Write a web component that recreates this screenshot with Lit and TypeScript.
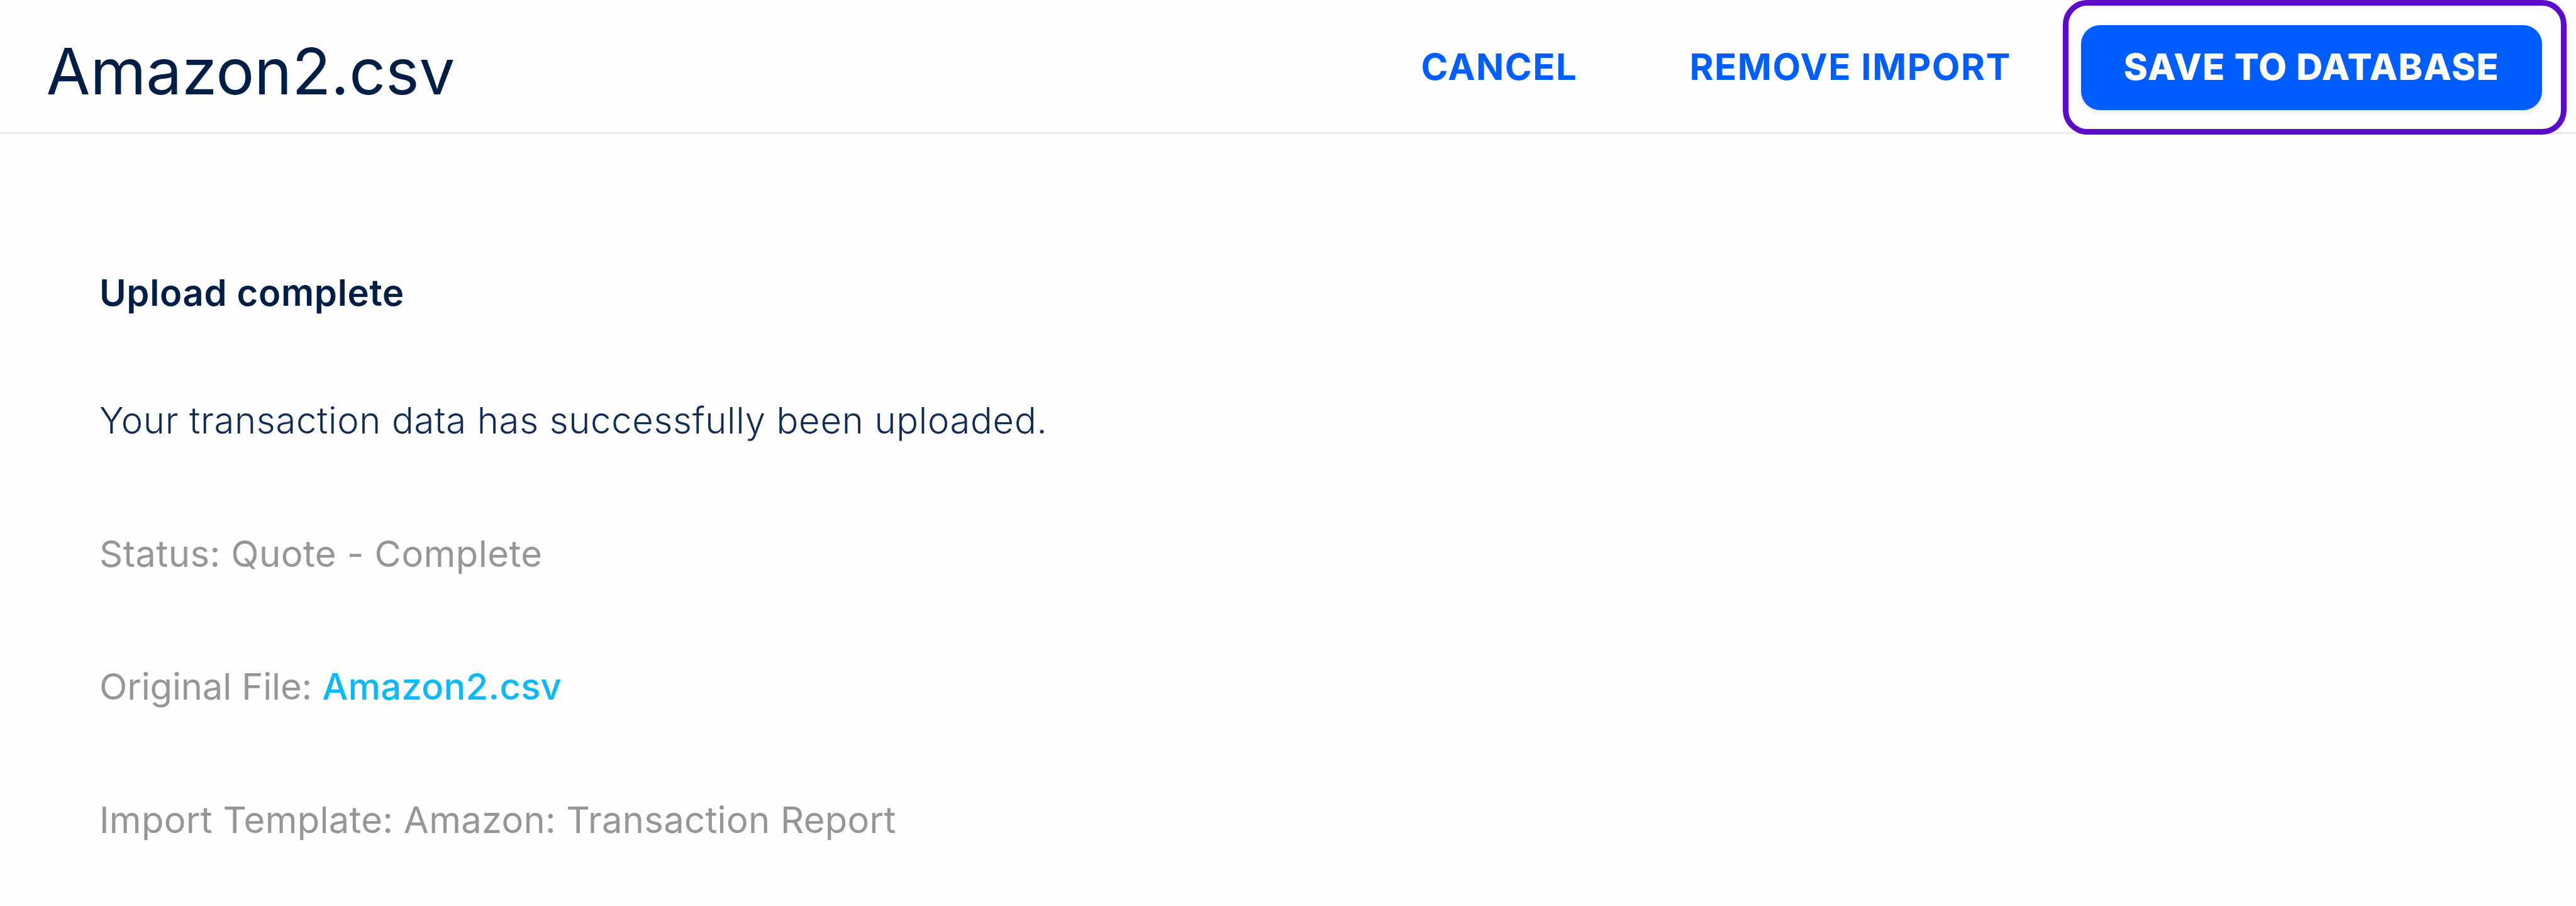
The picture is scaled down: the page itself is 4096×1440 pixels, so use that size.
import { html, css, LitElement } from 'lit';
import { customElement, property } from 'lit/decorators.js';

@customElement('import-header')
export class ImportHeader extends LitElement {
  @property({ type: String }) heading = '';

  static styles = css`
    :host {
      display: flex;
      align-items: flex-start;
      box-sizing: border-box;
      height: 213px;
      padding-left: 73.5px;
      padding-right: 54px;
      border-bottom: 3px solid #e8e8e8;
    }
    .title {
      margin: 0;
      padding-top: 52px;
      font-size: 101.5px;
      line-height: 122px;
      font-weight: 400;
      letter-spacing: -0.1px;
      color: #001e46;
    }
    .actions {
      display: flex;
      gap: 46px;
      margin-left: auto;
      padding-top: 40px;
    }
    .btn {
      box-sizing: border-box;
      height: 135px;
      margin: 0;
      padding: 0 65px 2px 67px;
      border: 0;
      border-radius: 30px;
      background: none;
      font-family: inherit;
      font-size: 58px;
      font-weight: 700;
      line-height: 133px;
      letter-spacing: 1.55px;
      text-transform: uppercase;
      white-space: nowrap;
      color: #005eff;
    }
    .btn.primary {
      width: 733px;
      padding-left: 0;
      padding-right: 0;
      font-weight: 800;
      letter-spacing: 1.25px;
      background: #005eff;
      color: #fff;
      box-shadow: 0 4px 7px rgba(80, 40, 0, 0.1);
    }
    .highlight {
      position: relative;
      display: flex;
    }
    /* ring drawn over the header around the main action */
    .highlight::after {
      content: '';
      position: absolute;
      inset: -40px -39px -39px -29px;
      border: 9px solid #5c0bc8;
      border-radius: 39px;
      pointer-events: none;
    }
  `;

  render() {
    return html`
      <h1 class="title">${this.heading}</h1>
      <div class="actions">
        <button class="btn cancel">Cancel</button>
        <button class="btn remove">Remove import</button>
        <div class="highlight">
          <button class="btn primary">Save to database</button>
        </div>
      </div>
    `;
  }
}

@customElement('app-root')
export class AppRoot extends LitElement {
  @property({ type: String }) fileName = 'Amazon2.csv';
  @property({ type: String }) status = 'Quote - Complete';
  @property({ type: String }) template = 'Amazon: Transaction Report';

  static styles = css`
    :host {
      display: block;
      height: 1440px;
      overflow: hidden;
      background: #fefefe;
      font-family: Inter, 'Liberation Sans', sans-serif;
    }
    .content {
      display: flex;
      flex-direction: column;
      padding: 217px 158px 0;
      font-size: 58px;
      line-height: 70px;
      color: #969696;
    }
    .content p {
      margin: 0 0 141.6px;
      white-space: nowrap;
    }
    .content .done {
      margin-bottom: 133px;
      font-weight: 600;
      letter-spacing: 0.65px;
      color: #001e46;
    }
    .content .message {
      font-weight: 300;
      letter-spacing: 0.65px;
      color: #102c54;
    }
    .status {
      letter-spacing: 0.42px;
    }
    .source {
      letter-spacing: -0.2px;
    }
    .template {
      letter-spacing: 0.25px;
    }
    .file {
      font-weight: 500;
      letter-spacing: 0.25px;
      color: #0ab9fa;
      text-decoration: none;
    }
  `;

  render() {
    return html`
      <import-header .heading=${this.fileName}></import-header>
      <div class="content">
        <p class="done">Upload complete</p>
        <p class="message">Your transaction data has successfully been uploaded.</p>
        <p class="status">Status: ${this.status}</p>
        <p class="source">Original File: <a class="file">${this.fileName}</a></p>
        <p class="template">Import Template: ${this.template}</p>
      </div>
    `;
  }
}
